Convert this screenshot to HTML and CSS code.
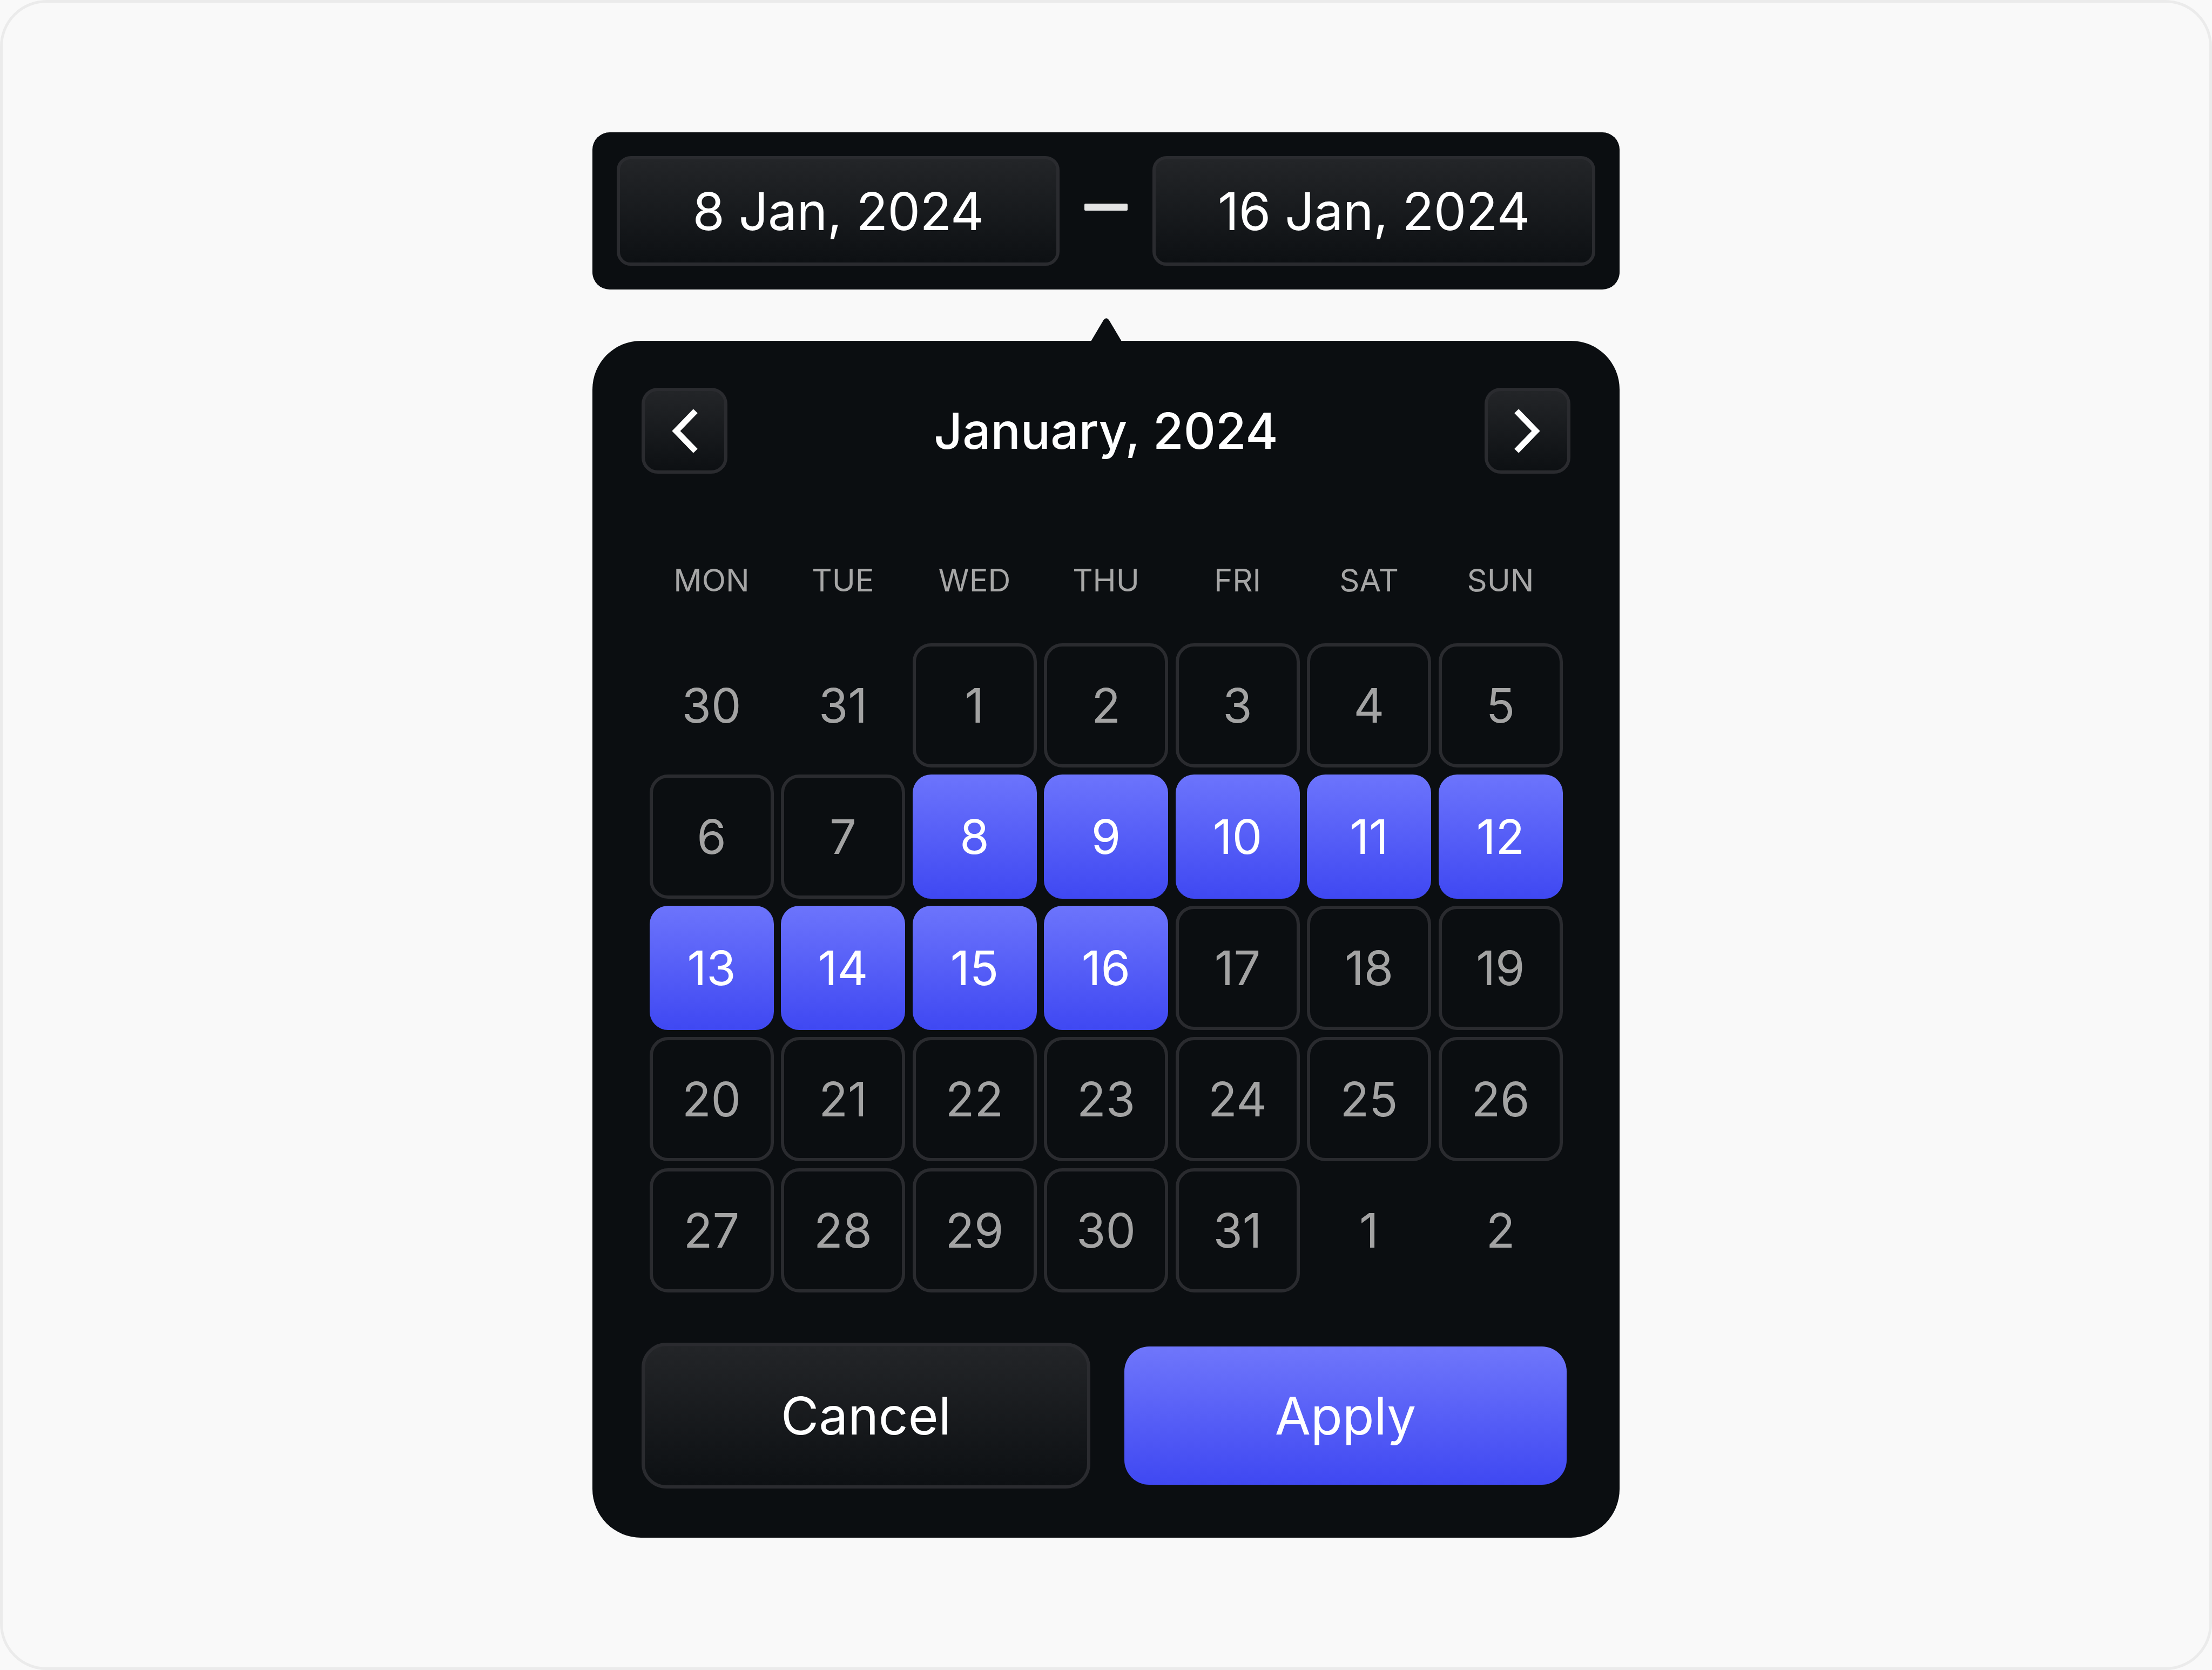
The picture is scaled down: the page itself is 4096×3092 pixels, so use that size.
FILE: index.html
```html
<!DOCTYPE html>
<html lang="en">
<head>
  <meta charset="UTF-8">
  <title>Date Range Picker</title>
  <meta name="viewport" content="width=device-width, initial-scale=1.0">
  <link rel="stylesheet" href="styles.css">
</head>
<body>
  <div class="frame">
    <div class="picker">
      <!-- Selected range -->
      <div class="range-bar">
        <div class="date-field">8 Jan, 2024</div>
        <span class="dash"></span>
        <div class="date-field">16 Jan, 2024</div>
      </div>

      <!-- Calendar popover -->
      <div class="calendar">
        <svg class="pointer" viewBox="0 0 57 44" width="57" height="44">
          <path d="M0 44 L23.5 4.5 Q28.5 -2 33.5 4.5 L57 44 Z" fill="#0b0e11"/>
        </svg>

        <div class="cal-head">
          <button class="nav-btn" aria-label="Previous month">
            <svg viewBox="0 0 48 80" width="48" height="80">
              <path d="M40 7 L8 40 L40 73" fill="none" stroke="#fff" stroke-width="11" stroke-linecap="square"/>
            </svg>
          </button>
          <h2 class="month-title">January, 2024</h2>
          <button class="nav-btn" aria-label="Next month">
            <svg viewBox="0 0 48 80" width="48" height="80">
              <path d="M8 7 L40 40 L8 73" fill="none" stroke="#fff" stroke-width="11" stroke-linecap="square"/>
            </svg>
          </button>
        </div>

        <div class="weekdays">
          <span>MON</span><span>TUE</span><span>WED</span><span>THU</span>
          <span>FRI</span><span>SAT</span><span>SUN</span>
        </div>

        <div class="days">
          <span class="day muted">30</span>
          <span class="day muted">31</span>
          <span class="day">1</span>
          <span class="day">2</span>
          <span class="day">3</span>
          <span class="day">4</span>
          <span class="day">5</span>

          <span class="day">6</span>
          <span class="day">7</span>
          <span class="day selected">8</span>
          <span class="day selected">9</span>
          <span class="day selected">10</span>
          <span class="day selected">11</span>
          <span class="day selected">12</span>

          <span class="day selected">13</span>
          <span class="day selected">14</span>
          <span class="day selected">15</span>
          <span class="day selected">16</span>
          <span class="day">17</span>
          <span class="day">18</span>
          <span class="day">19</span>

          <span class="day">20</span>
          <span class="day">21</span>
          <span class="day">22</span>
          <span class="day">23</span>
          <span class="day">24</span>
          <span class="day">25</span>
          <span class="day">26</span>

          <span class="day">27</span>
          <span class="day">28</span>
          <span class="day">29</span>
          <span class="day">30</span>
          <span class="day">31</span>
          <span class="day muted">1</span>
          <span class="day muted">2</span>
        </div>

        <div class="actions">
          <button class="btn btn-cancel">Cancel</button>
          <button class="btn btn-apply">Apply</button>
        </div>
      </div>
    </div>
  </div>
</body>
</html>
```

FILE: styles.css
```css
body {
  font-family: Inter, 'Noto Sans', sans-serif;
  margin: 0;
  padding: 0;
  background: #f9f9f9;
}

.frame {
  box-sizing: border-box;
  width: 100vw;
  height: 100vh;
  border: 5px solid #ebebeb;
  border-radius: 86px;
  background: #f9f9f9;
  display: flex;
  align-items: center;
  justify-content: center;
}

.picker {
  width: 1902px;
  display: flex;
  flex-direction: column;
  gap: 95px;
}

/* Range bar */
.range-bar {
  background: #0b0e11;
  border-radius: 32px;
  padding: 44px 45px;
  display: flex;
  align-items: center;
  gap: 46px;
}

.date-field {
  flex: 1;
  box-sizing: border-box;
  height: 203px;
  border: 6px solid #2a2b2f;
  border-radius: 26px;
  background: linear-gradient(#232528, #0d1013);
  display: flex;
  align-items: center;
  justify-content: center;
  color: #fff;
  font-size: 96px;
  letter-spacing: -0.5px;
}

.dash {
  width: 80px;
  height: 13px;
  margin-bottom: 14px;
  background: #e4e4e4;
  border-radius: 2px;
}

/* Calendar */
.calendar {
  position: relative;
  background: #0b0e11;
  border-radius: 90px;
  padding: 87px 91px 91px;
}

.pointer {
  position: absolute;
  top: -43px;
  left: 50%;
  margin-left: -28px;
  display: block;
}

.cal-head {
  height: 159px;
  display: flex;
  align-items: center;
  justify-content: space-between;
}

.nav-btn {
  box-sizing: border-box;
  width: 159px;
  height: 159px;
  padding: 0;
  border: 6px solid #2a2b2f;
  border-radius: 30px;
  background: linear-gradient(#232528, #0d1013);
  display: flex;
  align-items: center;
  justify-content: center;
  cursor: pointer;
}

.month-title {
  margin: 0;
  color: #fff;
  font-size: 92px;
  font-weight: 500;
}

.weekdays,
.days {
  display: grid;
  grid-template-columns: repeat(7, 230px);
  column-gap: 13.5px;
  justify-content: center;
}

.weekdays {
  margin-top: 157px;
  line-height: 80px;
  font-size: 58px;
  color: #a6a6a6;
  text-align: center;
}

.days {
  margin-top: 77px;
  row-gap: 13px;
}

.day {
  box-sizing: border-box;
  height: 230px;
  border: 6px solid #2a2b2f;
  border-radius: 34px;
  display: flex;
  align-items: center;
  justify-content: center;
  font-size: 88px;
  color: #a3a3a3;
}

.day.muted {
  border-color: transparent;
}

.day.selected {
  border: 0;
  background: linear-gradient(#6c74fc, #3f48f2);
  color: #fff;
}

/* Footer buttons */
.actions {
  display: flex;
  gap: 56px;
  margin-top: 93px;
}

.btn {
  flex: 1;
  box-sizing: border-box;
  height: 270px;
  border-radius: 46px;
  font-family: inherit;
  font-size: 96px;
  color: #fff;
  cursor: pointer;
}

.btn-cancel {
  border: 6px solid #2a2b2f;
  background: linear-gradient(#232528, #0d1013);
}

.btn-apply {
  margin: 7px;
  height: 256px;
  border: 0;
  background: linear-gradient(#6f76fb, #3f48f2);
}
```
